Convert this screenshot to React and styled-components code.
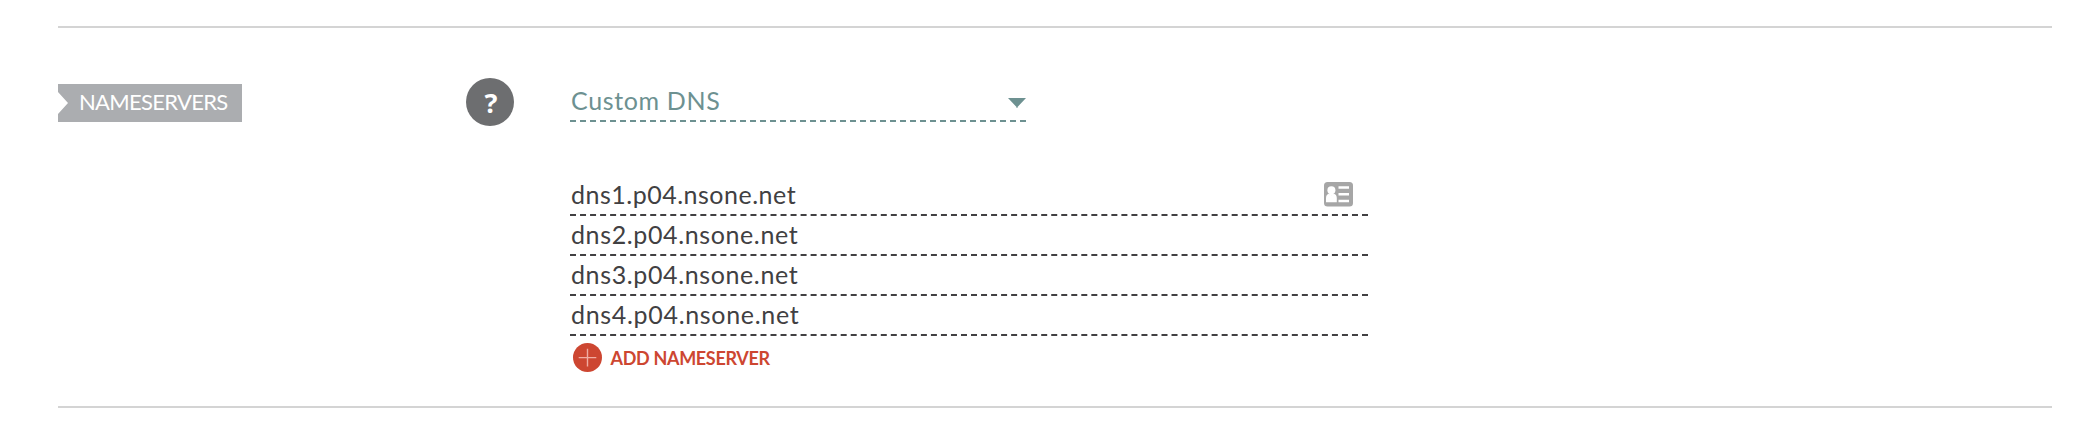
import React from "react";
import styled, { createGlobalStyle } from "styled-components";

const GlobalStyle = createGlobalStyle`
  * { box-sizing: border-box; }
  body {
    margin: 0;
    background: #fff;
    font-family: Lato, "Open Sans", sans-serif;
    color: #414042;
  }
`;

const Page = styled.main`
  padding: 26px 44px 0 58px;
  height: 422px;
`;

const Section = styled.section`
  display: flex;
  align-items: flex-start;
  height: 382px;
  border-top: 2px solid #d4d4d4;
  border-bottom: 2px solid #d4d4d4;
`;

const LabelColumn = styled.div`
  width: 408px;
  padding-top: 56px;
`;

const Tag = styled.div`
  width: 184px;
  height: 38px;
  padding-left: 21px;
  background: #abadb0;
  clip-path: polygon(0 0, 100% 0, 100% 100%, 0 100%, 0 30px, 10px 19px, 0 8px);
  color: #fff;
  font-size: 22px;
  line-height: 36px;
  letter-spacing: ${(p) => p.$spacing}px;
  white-space: nowrap;
`;

const Help = styled.button`
  flex: none;
  width: 48px;
  height: 48px;
  margin: 50px 56px 0 0;
  padding: 1px 0 0 2px;
  border: 0;
  border-radius: 50%;
  background: #6d6e70;
  color: #fff;
  font: 700 27px/48px "Noto Sans", sans-serif;
`;

const Content = styled.div`
  width: 798px;
  padding-top: 56px;
`;

const Select = styled.div`
  display: flex;
  justify-content: space-between;
  width: 456px;
  height: 38px;
  margin-bottom: 54px;
  border-bottom: 2px dashed #6d9191;
  color: #6d9191;
  font-size: 25px;
  line-height: 32px;
  letter-spacing: ${(p) => p.$spacing}px;
`;

const Arrow = styled.svg`
  width: 18px;
  height: 10px;
  margin-top: 14px;
`;

const Row = styled.div`
  display: flex;
  justify-content: space-between;
  height: 40px;
  padding-right: 15px;
  border-bottom: 2px dashed #414042;
  font-size: 25px;
  line-height: 36px;
  letter-spacing: ${(p) => p.$spacing}px;
`;

const CardIcon = styled.svg`
  width: 29px;
  height: 25px;
  margin-top: 6px;
`;

const Add = styled.button`
  display: flex;
  align-items: center;
  gap: 8px;
  height: 44px;
  padding: 0 0 0 2px;
  border: 0;
  background: none;
  color: #cd4631;
  font: 700 18px/22px Lato, sans-serif;
  letter-spacing: ${(p) => p.$spacing}px;
`;

const PlusIcon = styled.svg`
  width: 30px;
  height: 30px;
`;

const Text = styled.span`
  padding-left: ${(p) => p.$inset || 0}px;
`;

const servers = [
  { name: "dns1.p04.nsone.net", spacing: 0.5 },
  { name: "dns2.p04.nsone.net", spacing: 0.62 },
  { name: "dns3.p04.nsone.net", spacing: 0.62 },
  { name: "dns4.p04.nsone.net", spacing: 0.68 },
];

export default function App() {
  return (
    <Page>
      <GlobalStyle />
      <Section>
        <LabelColumn>
          <Tag $spacing={-0.7}>NAMESERVERS</Tag>
        </LabelColumn>
        <Help aria-label="Help">?</Help>
        <Content>
          <Select $spacing={0.65}>
            <Text $inset={1}>Custom DNS</Text>
            <Arrow viewBox="0 0 18 10" aria-hidden="true">
              <path d="M0 0H18L9.5 9V10H8.5V9Z" fill="#6d9191" />
            </Arrow>
          </Select>
          {servers.map((s, i) => (
            <Row key={s.name} $spacing={s.spacing}>
              <Text $inset={1}>{s.name}</Text>
              {i === 0 && (
                <CardIcon viewBox="0 0 29 25" aria-hidden="true">
                  <rect width="29" height="24.5" rx="3.5" fill="#a6a6a6" />
                  <circle cx="7.4" cy="8.2" r="4" fill="#fff" />
                  <path d="M2 20.3V16Q2.2 12.4 5 11.8L7.4 13.2L9.8 11.8Q12.6 12.4 12.8 16V20.3Z" fill="#fff" />
                  <path d="M5.6 11H9.2V13.5H5.6Z" fill="#fff" />
                  <path d="M14.5 4.2H25V6.8H14.5ZM14.5 11H25V13.5H14.5ZM14.5 17.7H25V20.2H14.5Z" fill="#fff" />
                </CardIcon>
              )}
            </Row>
          ))}
          <Add $spacing={-0.33}>
            <PlusIcon viewBox="0 0 30 30" aria-hidden="true">
              <circle cx="15.5" cy="14.6" r="14.5" fill="#cd4631" />
              <path d="M6.7 14.6H24.3M15.5 5.8V23.4" stroke="#f0aca2" strokeWidth="1.4" />
            </PlusIcon>
            <Text $inset={0.5}>ADD NAMESERVER</Text>
          </Add>
        </Content>
      </Section>
    </Page>
  );
}
